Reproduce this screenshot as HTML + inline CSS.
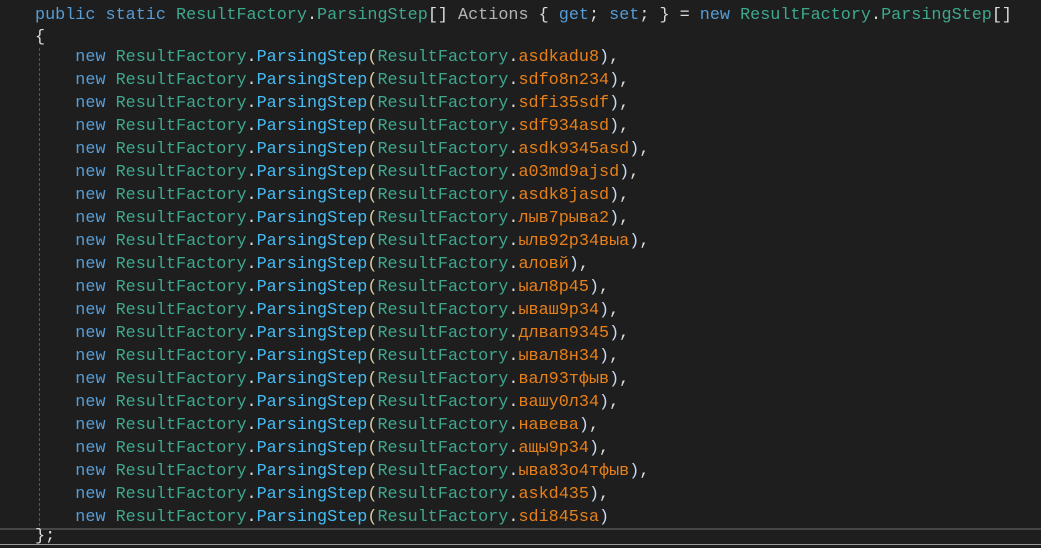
<!DOCTYPE html>
<html><head><meta charset="utf-8"><style>
html,body{margin:0;padding:0;background:#1e1e1e;width:1041px;height:548px;overflow:hidden;position:relative}
.l{position:absolute;left:35px;white-space:pre;font-family:"Liberation Mono","DejaVu Sans Mono",monospace;font-size:16.8px;line-height:20px;color:#dcdcdc}
.k{color:#569cd6}.t{color:#3ea88e}.m{color:#45bdf5}.f{color:#e8801a}.y{color:#d9cfa0}.z{color:#c8d8f0}.p{color:#b4b4b4}
.guide{position:absolute;left:39px;top:48px;height:478px;border-left:1px dashed #555}
.h1{position:absolute;left:0;width:1041px;top:528px;height:2px;background:#464646}
.h2{position:absolute;left:0;width:1041px;top:544px;height:1px;background:#9a9a9a}
</style></head><body>
<div class="guide"></div>
<div class="h1"></div><div class="h2"></div>
<div class="l" style="top:6px"><span class="k">public</span> <span class="k">static</span> <span class="t">ResultFactory</span>.<span class="t">ParsingStep</span>[] <span class="p">Actions</span> { <span class="k">get</span>; <span class="k">set</span>; } = <span class="k">new</span> <span class="t">ResultFactory</span>.<span class="t">ParsingStep</span>[]</div>
<div class="l" style="top:28px">{</div>
<div class="l" style="top:48px">    <span class="k">new</span> <span class="t">ResultFactory</span>.<span class="m">ParsingStep</span><span class="y">(</span><span class="t">ResultFactory</span>.<span class="f">asdkadu8</span><span class="z">)</span>,</div>
<div class="l" style="top:71px">    <span class="k">new</span> <span class="t">ResultFactory</span>.<span class="m">ParsingStep</span><span class="y">(</span><span class="t">ResultFactory</span>.<span class="f">sdfo8n234</span><span class="z">)</span>,</div>
<div class="l" style="top:94px">    <span class="k">new</span> <span class="t">ResultFactory</span>.<span class="m">ParsingStep</span><span class="y">(</span><span class="t">ResultFactory</span>.<span class="f">sdfi35sdf</span><span class="z">)</span>,</div>
<div class="l" style="top:117px">    <span class="k">new</span> <span class="t">ResultFactory</span>.<span class="m">ParsingStep</span><span class="y">(</span><span class="t">ResultFactory</span>.<span class="f">sdf934asd</span><span class="z">)</span>,</div>
<div class="l" style="top:140px">    <span class="k">new</span> <span class="t">ResultFactory</span>.<span class="m">ParsingStep</span><span class="y">(</span><span class="t">ResultFactory</span>.<span class="f">asdk9345asd</span><span class="z">)</span>,</div>
<div class="l" style="top:163px">    <span class="k">new</span> <span class="t">ResultFactory</span>.<span class="m">ParsingStep</span><span class="y">(</span><span class="t">ResultFactory</span>.<span class="f">a03md9ajsd</span><span class="z">)</span>,</div>
<div class="l" style="top:186px">    <span class="k">new</span> <span class="t">ResultFactory</span>.<span class="m">ParsingStep</span><span class="y">(</span><span class="t">ResultFactory</span>.<span class="f">asdk8jasd</span><span class="z">)</span>,</div>
<div class="l" style="top:209px">    <span class="k">new</span> <span class="t">ResultFactory</span>.<span class="m">ParsingStep</span><span class="y">(</span><span class="t">ResultFactory</span>.<span class="f">лыв7рыва2</span><span class="z">)</span>,</div>
<div class="l" style="top:232px">    <span class="k">new</span> <span class="t">ResultFactory</span>.<span class="m">ParsingStep</span><span class="y">(</span><span class="t">ResultFactory</span>.<span class="f">ылв92р34выа</span><span class="z">)</span>,</div>
<div class="l" style="top:255px">    <span class="k">new</span> <span class="t">ResultFactory</span>.<span class="m">ParsingStep</span><span class="y">(</span><span class="t">ResultFactory</span>.<span class="f">аловй</span><span class="z">)</span>,</div>
<div class="l" style="top:278px">    <span class="k">new</span> <span class="t">ResultFactory</span>.<span class="m">ParsingStep</span><span class="y">(</span><span class="t">ResultFactory</span>.<span class="f">ыал8р45</span><span class="z">)</span>,</div>
<div class="l" style="top:301px">    <span class="k">new</span> <span class="t">ResultFactory</span>.<span class="m">ParsingStep</span><span class="y">(</span><span class="t">ResultFactory</span>.<span class="f">ываш9р34</span><span class="z">)</span>,</div>
<div class="l" style="top:324px">    <span class="k">new</span> <span class="t">ResultFactory</span>.<span class="m">ParsingStep</span><span class="y">(</span><span class="t">ResultFactory</span>.<span class="f">длвап9345</span><span class="z">)</span>,</div>
<div class="l" style="top:347px">    <span class="k">new</span> <span class="t">ResultFactory</span>.<span class="m">ParsingStep</span><span class="y">(</span><span class="t">ResultFactory</span>.<span class="f">ывал8н34</span><span class="z">)</span>,</div>
<div class="l" style="top:370px">    <span class="k">new</span> <span class="t">ResultFactory</span>.<span class="m">ParsingStep</span><span class="y">(</span><span class="t">ResultFactory</span>.<span class="f">вал93тфыв</span><span class="z">)</span>,</div>
<div class="l" style="top:393px">    <span class="k">new</span> <span class="t">ResultFactory</span>.<span class="m">ParsingStep</span><span class="y">(</span><span class="t">ResultFactory</span>.<span class="f">вашу0л34</span><span class="z">)</span>,</div>
<div class="l" style="top:416px">    <span class="k">new</span> <span class="t">ResultFactory</span>.<span class="m">ParsingStep</span><span class="y">(</span><span class="t">ResultFactory</span>.<span class="f">навева</span><span class="z">)</span>,</div>
<div class="l" style="top:439px">    <span class="k">new</span> <span class="t">ResultFactory</span>.<span class="m">ParsingStep</span><span class="y">(</span><span class="t">ResultFactory</span>.<span class="f">ащы9р34</span><span class="z">)</span>,</div>
<div class="l" style="top:462px">    <span class="k">new</span> <span class="t">ResultFactory</span>.<span class="m">ParsingStep</span><span class="y">(</span><span class="t">ResultFactory</span>.<span class="f">ыва83о4тфыв</span><span class="z">)</span>,</div>
<div class="l" style="top:485px">    <span class="k">new</span> <span class="t">ResultFactory</span>.<span class="m">ParsingStep</span><span class="y">(</span><span class="t">ResultFactory</span>.<span class="f">askd435</span><span class="z">)</span>,</div>
<div class="l" style="top:508px">    <span class="k">new</span> <span class="t">ResultFactory</span>.<span class="m">ParsingStep</span><span class="y">(</span><span class="t">ResultFactory</span>.<span class="f">sdi845sa</span><span class="z">)</span></div>
<div class="l" style="top:527px">};</div>
</body></html>
